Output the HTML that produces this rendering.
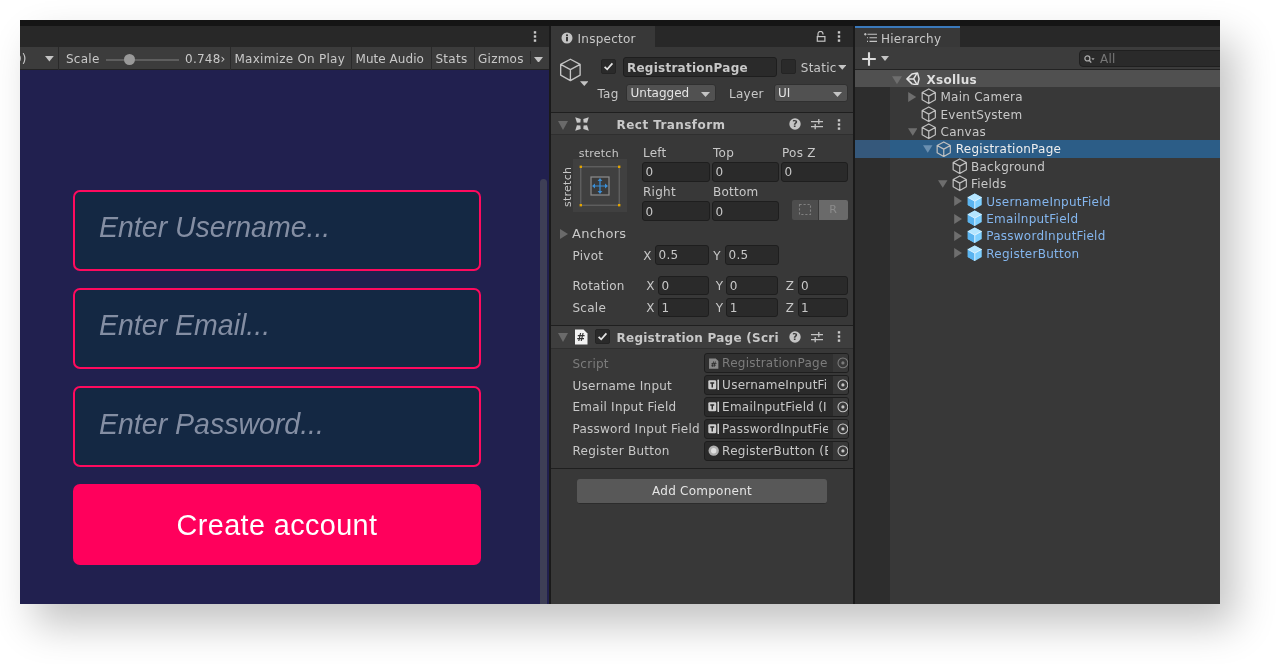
<!DOCTYPE html>
<html lang="en">
<head>
<meta charset="utf-8">
<title>Unity Registration Page</title>
<style>
*{box-sizing:border-box;margin:0;padding:0}
html,body{width:1280px;height:664px;background:#fff;overflow:hidden}
body{position:relative;font-family:"DejaVu Sans","Liberation Sans",sans-serif;font-size:12px;color:#c8c8c8}
#shot{position:absolute;left:20px;top:20px;width:1200px;height:584px;overflow:hidden;will-change:transform}
#shadow{position:absolute;left:20px;top:20px;width:1200px;height:584px;background:#383838;box-shadow:15px 21px 38px rgba(0,0,0,.235)}
.a{position:absolute}
.t{position:absolute;white-space:nowrap;line-height:14px;height:14px;letter-spacing:.25px;margin-top:.9px}
.b{font-weight:bold}
.fld{position:absolute;background:#2a2a2a;border:1px solid #1e1e1e;border-radius:3px;height:16px}
.fld span{position:absolute;left:2.5px;top:2.1px;line-height:14px;letter-spacing:.25px}
.vs{top:21px;width:1px;height:22.5px;background:#2a2a2a}
.gf{position:absolute;left:53px;width:408px;height:81px;border:2px solid #ff0a5e;border-radius:7px;background:#142843}
.gf span{position:absolute;left:24px;top:17.6px;font-family:"Liberation Sans",sans-serif;font-style:italic;font-size:29.7px;line-height:36px;color:#848ea3;white-space:nowrap;transform:scaleX(.96);transform-origin:0 50%}
.gb{position:absolute;left:53px;width:408px;height:81px;border-radius:7px;background:#ff005c;text-align:center}
.gb span{font-family:"Liberation Sans",sans-serif;font-size:28.8px;letter-spacing:.4px;line-height:82px;color:#fff;white-space:nowrap}
.s{font-size:11px}
.dis{color:#7c7c7c}
.cb{position:absolute;width:15px;height:15px;background:#2a2a2a;border:1px solid #242424;border-radius:2px}
.dd{position:absolute;height:18.6px;background:#515151;border-radius:3px;border:1px solid #303030}
.dd span{position:absolute;left:3.5px;top:1.4px;line-height:14px;letter-spacing:0;color:#e4e4e4}
.of{overflow:hidden}
.of.dis{background:#303030}
</style>
</head>
<body>
<div id="shadow"></div>
<div id="shot">
<!-- top strip -->
<div class="a" style="left:0;top:0;width:1200px;height:6px;background:#151515"></div>

<!-- ================= GAME PANEL ================= -->
<div id="game" class="a" style="left:0;top:6px;width:529px;height:578px;background:#21204f">
  <div class="a" style="left:0;top:0;width:529px;height:21px;background:#282828"></div>
  <!-- kebab -->
  <svg class="a" style="left:512px;top:4px" width="6" height="13" viewBox="0 0 6 13"><g fill="#c8c8c8"><rect x="1.8" y="1.2" width="2.4" height="2.4"/><rect x="1.8" y="5.3" width="2.4" height="2.4"/><rect x="1.8" y="9.4" width="2.4" height="2.4"/></g></svg>
  <!-- toolbar -->
  <div class="a" style="left:0;top:21px;width:529px;height:22.9px;background:#3c3c3c;border-bottom:1px solid #232323"></div>
  <div class="t" style="left:-6.1px;top:25px">9)</div>
  <svg class="a" style="left:25.3px;top:30.3px" width="8.8" height="5.5" viewBox="0 0 8 5"><path d="M0 0h8L4 5z" fill="#c4c4c4"/></svg>
  <div class="a vs" style="left:38px"></div>
  <div class="t" style="left:46px;top:25px">Scale</div>
  <div class="a" style="left:86px;top:32.5px;width:73px;height:2px;background:#5e5e5e"></div>
  <div class="a" style="left:104px;top:28px;width:11px;height:11px;border-radius:50%;background:#999"></div>
  <div class="t" style="left:165px;top:25px">0.748&#8250;</div>
  <div class="a vs" style="left:210px"></div>
  <div class="t" style="left:214.5px;top:25px">Maximize On Play</div>
  <div class="a vs" style="left:331px"></div>
  <div class="t" style="left:335.5px;top:25px;letter-spacing:.05px">Mute Audio</div>
  <div class="a vs" style="left:411px"></div>
  <div class="t" style="left:415.5px;top:25px">Stats</div>
  <div class="a vs" style="left:453.5px"></div>
  <div class="t" style="left:458px;top:25px">Gizmos</div>
  <div class="a" style="left:509.5px;top:25px;width:1px;height:13px;background:#2a2a2a"></div>
  <svg class="a" style="left:514.4px;top:30.6px" width="9" height="5.8" viewBox="0 0 8 5"><path d="M0 0h8L4 5z" fill="#c4c4c4"/></svg>
  <!-- scrollbar -->
  <div class="a" style="left:520px;top:152.6px;width:7px;height:430px;background:#3e3f56;border-radius:3.5px 3.5px 0 0"></div>
  <!-- form -->
  <div class="gf" style="top:163.5px"><span>Enter Username...</span></div>
  <div class="gf" style="top:261.8px"><span>Enter Email...</span></div>
  <div class="gf" style="top:360.1px"><span>Enter Password...</span></div>
  <div class="gb" style="top:458.4px"><span>Create account</span></div>
</div>

<!-- divider -->
<div class="a" style="left:529px;top:6px;width:2px;height:578px;background:#1a1a1a"></div>

<!-- ================= INSPECTOR ================= -->
<div id="insp" class="a" style="left:531px;top:6px;width:302px;height:578px;background:#383838">
  <div class="a" style="left:0;top:0;width:302px;height:21px;background:#282828"></div>
  <div class="a" style="left:0;top:0;width:103.5px;height:21px;background:#383838"></div>
  <svg class="a" style="left:9.5px;top:5.5px" width="12" height="12" viewBox="0 0 12 12"><circle cx="6" cy="6" r="5.5" fill="#c4c4c4"/><rect x="5" y="5" width="2" height="4.3" fill="#383838"/><rect x="5" y="2.4" width="2" height="1.8" fill="#383838"/></svg>
  <div class="t" style="left:26.5px;top:4.7px">Inspector</div>
  <svg class="a" style="left:265px;top:5.3px" width="10" height="11" viewBox="0 0 10 11"><path d="M2 5.4V2.9a2.5 2.5 0 0 1 5 0V3.6" fill="none" stroke="#c4c4c4" stroke-width="1.2"/><rect x="1.3" y="5.6" width="7.6" height="4.6" fill="none" stroke="#c4c4c4" stroke-width="1.2"/></svg>
  <svg class="a" style="left:285px;top:4px" width="6" height="13" viewBox="0 0 6 13"><g fill="#c8c8c8"><rect x="1.8" y="1.2" width="2.4" height="2.4"/><rect x="1.8" y="5.3" width="2.4" height="2.4"/><rect x="1.8" y="9.4" width="2.4" height="2.4"/></g></svg>
  <svg class="a" style="left:8px;top:32.4px" width="22.8" height="23.8" viewBox="0 0 22 23"><path d="M11 1.2 20.4 6.2V16.6L11 21.8 1.6 16.6V6.2zM1.6 6.2 11 11.2 20.4 6.2M11 11.2V21.8" fill="none" stroke="#c4c4c4" stroke-width="1.3" stroke-linejoin="round"/></svg>
  <svg class="a" style="left:28.6px;top:55.1px" width="8.6" height="5.2" viewBox="0 0 7 4"><path d="M0 0h7L3.5 4z" fill="#c4c4c4"/></svg>
  <div class="cb" style="left:50.1px;top:33.0px"><svg width="13" height="13" viewBox="0 0 13 13" style="position:absolute;left:0;top:0"><path d="M2.6 6.8 5.2 9.3 10.4 3.4" fill="none" stroke="#e4e4e4" stroke-width="1.7"/></svg></div>
  <div class="fld" style="left:72.2px;top:31.2px;width:153.4px;height:19.4px"><span class="b" style="top:2.6px;left:2.8px">RegistrationPage</span></div>
  <div class="cb" style="left:229.8px;top:33.2px"></div>
  <div class="t" style="left:249.8px;top:33.9px">Static</div>
  <svg class="a" style="left:286.5px;top:38.9px" width="8.5" height="4.7" viewBox="0 0 7 4"><path d="M0 0h7L3.5 4z" fill="#c4c4c4"/></svg>
  <div class="t" style="left:46.5px;top:59.7px">Tag</div>
  <div class="dd" style="left:75px;top:57.9px;width:90.3px"><span>Untagged</span><svg width="9" height="5" viewBox="0 0 9 5" style="position:absolute;right:5px;top:7px"><path d="M0 0h9L4.5 5z" fill="#c4c4c4"/></svg></div>
  <div class="t" style="left:178px;top:59.7px">Layer</div>
  <div class="dd" style="left:222.5px;top:57.9px;width:74px"><span>UI</span><svg width="9" height="5" viewBox="0 0 9 5" style="position:absolute;right:5px;top:7px"><path d="M0 0h9L4.5 5z" fill="#c4c4c4"/></svg></div>
  <div class="a" style="left:0;top:86px;width:302px;height:23px;background:#3e3e3e;border-top:1px solid #1f1f1f;border-bottom:1px solid #2f2f2f"></div>
  <svg class="a" style="left:6.7px;top:94.5px" width="10" height="9" viewBox="0 0 10 9"><path d="M0 0h10L5 9z" fill="#6a6a6a"/></svg>
  <svg class="a" style="left:24px;top:91.3px" width="14" height="14" viewBox="0 0 14 14"><g fill="#c8c8c8"><path d="M0.2 0.2 5.7 1.9 5.4 5.4 1.9 5.7z"/><path d="M13.8 0.2 12.1 5.7 8.6 5.4 8.3 1.9z"/><path d="M0.2 13.8 1.9 8.3 5.4 8.6 5.7 12.1z"/><path d="M13.8 13.8 8.3 12.1 8.6 8.6 12.1 8.3z"/></g></svg>
  <div class="t b" style="left:65.6px;top:91.1px;letter-spacing:.43px">Rect Transform</div>
  <svg class="a" style="left:238px;top:92.2px" width="12" height="12" viewBox="0 0 12 12"><circle cx="6" cy="6" r="5.7" fill="#c4c4c4"/><text x="6" y="9.4" text-anchor="middle" font-family="DejaVu Sans, sans-serif" font-weight="bold" font-size="9.5" fill="#3e3e3e">?</text></svg>
  <svg class="a" style="left:259.8px;top:92.2px" width="12" height="12" viewBox="0 0 12 12"><g stroke="#c4c4c4" stroke-width="1.3" fill="none"><path d="M0 3.7h12M0 8.6h12M7.8 1v5.2M4.2 6v5.2"/></g></svg>
  <svg class="a" style="left:285px;top:91.7px" width="6" height="13" viewBox="0 0 6 13"><g fill="#c8c8c8"><rect x="1.8" y="1.2" width="2.4" height="2.4"/><rect x="1.8" y="5.3" width="2.4" height="2.4"/><rect x="1.8" y="9.4" width="2.4" height="2.4"/></g></svg>
  <div class="a" style="left:22.3px;top:133.4px;width:53.4px;height:52.4px;background:#404040"></div>
  <svg class="a" style="left:26.8px;top:137.9px" width="44" height="44" viewBox="0 0 44 44"><rect x="2.8" y="2.8" width="38.4" height="38.4" fill="none" stroke="#6b6b6b" stroke-width="1"/><g fill="#e2a400"><rect x="1.6" y="1.6" width="2.4" height="2.4"/><rect x="40" y="1.6" width="2.4" height="2.4"/><rect x="1.6" y="40" width="2.4" height="2.4"/><rect x="40" y="40" width="2.4" height="2.4"/></g><rect x="13" y="13" width="18" height="18" fill="#3a3a3a" stroke="#8e8e8e" stroke-width="1.2"/><g stroke="#3a8fd8" stroke-width="1.2" fill="#3a8fd8"><path d="M22 15.5v13M15.5 22h13" fill="none"/><path d="M22 14l2.4 3h-4.8zM22 30l2.4-3h-4.8zM14 22l3-2.4v4.8zM30 22l-3-2.4v4.8z" stroke="none"/></g></svg>
  <div class="t s" style="left:27.7px;top:120px">stretch</div>
  <div class="t s" style="left:9.5px;top:180px;transform:rotate(-90deg);transform-origin:0 0">stretch</div>
  <div class="t" style="left:92px;top:119.3px">Left</div>
  <div class="t" style="left:162px;top:119.3px">Top</div>
  <div class="t" style="left:231px;top:119.3px">Pos Z</div>
  <div class="fld" style="left:91px;top:136.05px;width:67.5px;height:19.6px"><span>0</span></div>
  <div class="fld" style="left:161px;top:136.05px;width:67.3px;height:19.6px"><span>0</span></div>
  <div class="fld" style="left:230px;top:136.05px;width:67.3px;height:19.6px"><span>0</span></div>
  <div class="t" style="left:92px;top:157.8px">Right</div>
  <div class="t" style="left:162px;top:157.8px">Bottom</div>
  <div class="fld" style="left:91px;top:175.45px;width:67.5px;height:19.6px"><span>0</span></div>
  <div class="fld" style="left:161px;top:175.45px;width:67.3px;height:19.6px"><span>0</span></div>
  <div class="a" style="left:241.3px;top:174px;width:26px;height:20px;background:#4d4d4d;border-radius:2px 0 0 2px"><svg width="26" height="20" viewBox="0 0 26 20"><rect x="7.5" y="4.5" width="11" height="10" fill="none" stroke="#808080" stroke-width="1.1" stroke-dasharray="2.2 1.8"/></svg></div>
  <div class="a" style="left:267.6px;top:174px;width:29px;height:20px;background:#6a6a6a;border-radius:0 2px 2px 0;text-align:center;color:#8c8c8c;line-height:19px;font-size:11px">R</div>
  <svg class="a" style="left:9px;top:202.7px" width="8" height="10" viewBox="0 0 8 10"><path d="M0 0v10L8 5z" fill="#6a6a6a"/></svg>
  <div class="t" style="left:21px;top:199.2px;font-size:13px;line-height:16px;height:16px">Anchors</div>
  <div class="t" style="left:21.5px;top:221.7px">Pivot</div>
  <div class="t" style="left:92.2px;top:221.7px">X</div>
  <div class="fld" style="left:104px;top:219.2px;width:54.3px;height:19.6px"><span>0.5</span></div>
  <div class="t" style="left:162.2px;top:221.7px">Y</div>
  <div class="fld" style="left:174px;top:219.2px;width:54.3px;height:19.6px"><span>0.5</span></div>
  <div class="t" style="left:21.5px;top:252.2px">Rotation</div>
  <div class="t" style="left:95.2px;top:252.2px">X</div>
  <div class="fld" style="left:107px;top:249.7px;width:51.3px;height:19.6px"><span>0</span></div>
  <div class="t" style="left:164.7px;top:252.2px">Y</div>
  <div class="fld" style="left:175.2px;top:249.7px;width:51.8px;height:19.6px"><span>0</span></div>
  <div class="t" style="left:234.7px;top:252.2px">Z</div>
  <div class="fld" style="left:246.5px;top:249.7px;width:50.5px;height:19.6px"><span>0</span></div>
  <div class="t" style="left:21.5px;top:274.2px">Scale</div>
  <div class="t" style="left:95.2px;top:274.2px">X</div>
  <div class="fld" style="left:107px;top:271.7px;width:51.3px;height:19.6px"><span>1</span></div>
  <div class="t" style="left:164.7px;top:274.2px">Y</div>
  <div class="fld" style="left:175.2px;top:271.7px;width:51.8px;height:19.6px"><span>1</span></div>
  <div class="t" style="left:234.7px;top:274.2px">Z</div>
  <div class="fld" style="left:246.5px;top:271.7px;width:50.5px;height:19.6px"><span>1</span></div>
  <div class="a" style="left:0;top:299.2px;width:302px;height:23.8px;background:#3e3e3e;border-top:1px solid #1f1f1f;border-bottom:1px solid #2f2f2f"></div>
  <svg class="a" style="left:6.7px;top:307px" width="10" height="9" viewBox="0 0 10 9"><path d="M0 0h10L5 9z" fill="#6a6a6a"/></svg>
  <svg class="a" style="left:22.8px;top:302.7px" width="14" height="16" viewBox="0 0 14 16"><path d="M1 0.5h8.5L13.5 4.5V15.5H1z" fill="#f2f2f2"/><text x="7" y="12.3" text-anchor="middle" font-family="DejaVu Sans, sans-serif" font-weight="bold" font-size="10.5" fill="#333">#</text></svg>
  <div class="cb" style="left:44px;top:303.3px"><svg width="13" height="13" viewBox="0 0 13 13" style="position:absolute;left:0;top:0"><path d="M2.6 6.8 5.2 9.3 10.4 3.4" fill="none" stroke="#e4e4e4" stroke-width="1.7"/></svg></div>
  <div class="t b" style="left:65.5px;top:304.2px">Registration Page (Scri</div>
  <svg class="a" style="left:238px;top:304.7px" width="12" height="12" viewBox="0 0 12 12"><circle cx="6" cy="6" r="5.7" fill="#c4c4c4"/><text x="6" y="9.4" text-anchor="middle" font-family="DejaVu Sans, sans-serif" font-weight="bold" font-size="9.5" fill="#3e3e3e">?</text></svg>
  <svg class="a" style="left:259.8px;top:304.7px" width="12" height="12" viewBox="0 0 12 12"><g stroke="#c4c4c4" stroke-width="1.3" fill="none"><path d="M0 3.7h12M0 8.6h12M7.8 1v5.2M4.2 6v5.2"/></g></svg>
  <svg class="a" style="left:285px;top:304.2px" width="6" height="13" viewBox="0 0 6 13"><g fill="#c8c8c8"><rect x="1.8" y="1.2" width="2.4" height="2.4"/><rect x="1.8" y="5.3" width="2.4" height="2.4"/><rect x="1.8" y="9.4" width="2.4" height="2.4"/></g></svg>
  <div class="t dis" style="left:21.5px;top:329.9px">Script</div>
  <div class="fld of dis" style="left:153.3px;top:327.4px;width:144.6px;height:19.6px"><svg width="11.4" height="11.4" viewBox="0 0 11 11" style="position:absolute;left:2.7px;top:3.2px"><path d="M1 0.5h6.5L10 3V10.5H1z" fill="#8a8a8a"/><text x="5.5" y="9" text-anchor="middle" font-family="DejaVu Sans, sans-serif" font-weight="bold" font-size="7.5" fill="#2a2a2a">#</text></svg><span style="left:16.8px">RegistrationPage</span><svg width="20" height="18" viewBox="-5 0 20 18" style="position:absolute;right:0;top:0"><rect x="-5" y="0" width="5" height="18" fill="#303030"/><rect x="0" y="0" width="15" height="18" fill="#383838"/><circle cx="9.9" cy="8.9" r="4.9" fill="none" stroke="#7c7c7c" stroke-width="1.05"/><circle cx="9.9" cy="8.9" r="1.6" fill="#7c7c7c"/></svg></div>
  <div class="t" style="left:21.5px;top:351.7px">Username Input</div>
  <div class="fld of" style="left:153.3px;top:349.2px;width:144.6px;height:19.6px"><svg width="11.4" height="11.4" viewBox="0 0 11 11" style="position:absolute;left:2.7px;top:3.2px"><rect x="0.3" y="1.2" width="7.6" height="8.8" rx="1.2" fill="#cdcdcd"/><path d="M2.2 3.2h3.8v1.3H4.8v3.7H3.4V4.5H2.2z" fill="#2a2a2a"/><rect x="9.1" y="0.6" width="1.6" height="10" rx=".6" fill="#cdcdcd"/></svg><span style="left:16.8px">UsernameInputFi</span><svg width="20" height="18" viewBox="-5 0 20 18" style="position:absolute;right:0;top:0"><rect x="-5" y="0" width="5" height="18" fill="#2a2a2a"/><rect x="0" y="0" width="15" height="18" fill="#383838"/><circle cx="9.9" cy="8.9" r="4.9" fill="none" stroke="#c4c4c4" stroke-width="1.05"/><circle cx="9.9" cy="8.9" r="1.6" fill="#c4c4c4"/></svg></div>
  <div class="t" style="left:21.5px;top:373.5px">Email Input Field</div>
  <div class="fld of" style="left:153.3px;top:371.0px;width:144.6px;height:19.6px"><svg width="11.4" height="11.4" viewBox="0 0 11 11" style="position:absolute;left:2.7px;top:3.2px"><rect x="0.3" y="1.2" width="7.6" height="8.8" rx="1.2" fill="#cdcdcd"/><path d="M2.2 3.2h3.8v1.3H4.8v3.7H3.4V4.5H2.2z" fill="#2a2a2a"/><rect x="9.1" y="0.6" width="1.6" height="10" rx=".6" fill="#cdcdcd"/></svg><span style="left:16.8px">EmailnputField (I</span><svg width="20" height="18" viewBox="-5 0 20 18" style="position:absolute;right:0;top:0"><rect x="-5" y="0" width="5" height="18" fill="#2a2a2a"/><rect x="0" y="0" width="15" height="18" fill="#383838"/><circle cx="9.9" cy="8.9" r="4.9" fill="none" stroke="#c4c4c4" stroke-width="1.05"/><circle cx="9.9" cy="8.9" r="1.6" fill="#c4c4c4"/></svg></div>
  <div class="t" style="left:21.5px;top:395.5px">Password Input Field</div>
  <div class="fld of" style="left:153.3px;top:393.0px;width:144.6px;height:19.6px"><svg width="11.4" height="11.4" viewBox="0 0 11 11" style="position:absolute;left:2.7px;top:3.2px"><rect x="0.3" y="1.2" width="7.6" height="8.8" rx="1.2" fill="#cdcdcd"/><path d="M2.2 3.2h3.8v1.3H4.8v3.7H3.4V4.5H2.2z" fill="#2a2a2a"/><rect x="9.1" y="0.6" width="1.6" height="10" rx=".6" fill="#cdcdcd"/></svg><span style="left:16.8px">PasswordInputFie</span><svg width="20" height="18" viewBox="-5 0 20 18" style="position:absolute;right:0;top:0"><rect x="-5" y="0" width="5" height="18" fill="#2a2a2a"/><rect x="0" y="0" width="15" height="18" fill="#383838"/><circle cx="9.9" cy="8.9" r="4.9" fill="none" stroke="#c4c4c4" stroke-width="1.05"/><circle cx="9.9" cy="8.9" r="1.6" fill="#c4c4c4"/></svg></div>
  <div class="t" style="left:21.5px;top:417.5px">Register Button</div>
  <div class="fld of" style="left:153.3px;top:415.0px;width:144.6px;height:19.6px"><svg width="11.4" height="11.4" viewBox="0 0 11 11" style="position:absolute;left:2.7px;top:3.2px"><circle cx="5.5" cy="5.5" r="5" fill="#b0b0b0"/><circle cx="5.5" cy="5.5" r="2.6" fill="#e0e0e0"/></svg><span style="left:16.8px">RegisterButton (E</span><svg width="20" height="18" viewBox="-5 0 20 18" style="position:absolute;right:0;top:0"><rect x="-5" y="0" width="5" height="18" fill="#2a2a2a"/><rect x="0" y="0" width="15" height="18" fill="#383838"/><circle cx="9.9" cy="8.9" r="4.9" fill="none" stroke="#c4c4c4" stroke-width="1.05"/><circle cx="9.9" cy="8.9" r="1.6" fill="#c4c4c4"/></svg></div>
  <div class="a" style="left:0;top:442px;width:302px;height:1px;background:#1f1f1f"></div>
  <div class="a" style="left:26px;top:452.7px;width:250px;height:25.4px;background:#585858;border-radius:3px;text-align:center;line-height:25.4px;letter-spacing:.25px;color:#e4e4e4;border-bottom:1px solid #2c2c2c">Add Component</div>
</div>

<!-- divider -->
<div class="a" style="left:833px;top:6px;width:2px;height:578px;background:#1a1a1a"></div>

<!-- ================= HIERARCHY ================= -->
<div id="hier" class="a" style="left:835px;top:6px;width:365px;height:578px;background:#383838">
  <div class="a" style="left:0;top:0;width:365px;height:21px;background:#282828"></div>
  <div class="a" style="left:0;top:.3px;width:105px;height:20.7px;background:#383838;border-top:2.5px solid #3a79bb"></div>
  <svg class="a" style="left:8.5px;top:6.5px" width="13" height="10" viewBox="0 0 13 10"><g stroke="#c4c4c4" stroke-width="1.1" fill="none"><path d="M3.5 1.2H13M5.5 4.8H13M5.5 8.4H13M0 1.2h2.6M1.3 0v2.6M3 4.8H4M3 8.4H4"/></g></svg>
  <div class="t" style="left:26px;top:5.2px">Hierarchy</div>
  <div class="a" style="left:0;top:21px;width:365px;height:23px;background:#3c3c3c;border-bottom:1px solid #232323"></div>
  <svg class="a" style="left:7.1px;top:25.6px" width="14" height="14" viewBox="0 0 14 14"><path d="M7 0.3v13.4M0.2 7h13.6" stroke="#dcdcdc" stroke-width="2.1" fill="none"/></svg>
  <svg class="a" style="left:25.7px;top:30px" width="8" height="5" viewBox="0 0 8 5"><path d="M0 0h8L4 5z" fill="#c4c4c4"/></svg>
  <div class="a" style="left:224.4px;top:24.2px;width:150px;height:17px;background:#2a2a2a;border:1px solid #1f1f1f;border-radius:4px 0 0 4px"></div>
  <svg class="a" style="left:229.3px;top:28.5px" width="11" height="9" viewBox="0 0 11 9"><circle cx="3.4" cy="3.4" r="2.5" fill="none" stroke="#a8a8a8" stroke-width="1.3"/><path d="M5.2 5.2 7.2 7.6" stroke="#a8a8a8" stroke-width="1.4"/><path d="M7.4 3.2h3.2L9 5.2z" fill="#a8a8a8"/></svg>
  <div class="t" style="left:245px;top:25.5px;color:#777">All</div>
  <div class="a" style="left:0;top:61px;width:35px;height:520px;background:#2d2d2d"></div>
  <div class="a" style="left:0;top:44px;width:365px;height:17px;background:#505050"></div>
  <svg class="a" style="left:36.9px;top:49.6px" width="10" height="8.3" viewBox="0 0 10 8"><path d="M0 0h10L5 8z" fill="#6e6e6e"/></svg>
  <svg class="a" style="left:51.2px;top:45.6px" width="14" height="13.8" viewBox="0 0 15 15"><g fill="none" stroke="#e4e4e4" stroke-width="1.6" stroke-linejoin="round"><path d="M0.9 7.5 6.4 2.1 12.4 1 14.1 7.5 12.4 14 6.4 12.9z"/><path d="M0.9 7.5H8.2M8.2 7.5 11.4 2M8.2 7.5 11.4 13"/></g></svg>
  <div class="t b" style="left:71.6px;top:45.7px;color:#dedede">Xsollus</div>
  <svg class="a" style="left:53.2px;top:66.05px" width="8.4" height="10" viewBox="0 0 8 10"><path d="M0 0v10L8 5z" fill="#6e6e6e"/></svg>
  <svg class="a" style="left:66.0px;top:62.45px" width="15.5" height="16.5" viewBox="0 0 16 17"><path d="M8 1 14.8 4.6V12.2L8 16 1.2 12.2V4.6zM1.2 4.6 8 8.4 14.8 4.6M8 8.4V16" fill="none" stroke="#c0c0c0" stroke-width="1.25" stroke-linejoin="round"/></svg>
  <div class="t" style="left:85.5px;top:63.45px;">Main Camera</div>
  <svg class="a" style="left:66.0px;top:79.81px" width="15.5" height="16.5" viewBox="0 0 16 17"><path d="M8 1 14.8 4.6V12.2L8 16 1.2 12.2V4.6zM1.2 4.6 8 8.4 14.8 4.6M8 8.4V16" fill="none" stroke="#c0c0c0" stroke-width="1.25" stroke-linejoin="round"/></svg>
  <div class="t" style="left:85.5px;top:80.81px;">EventSystem</div>
  <svg class="a" style="left:52.8px;top:101.87px" width="9.5" height="8" viewBox="0 0 10 8"><path d="M0 0h10L5 8z" fill="#6e6e6e"/></svg>
  <svg class="a" style="left:66.0px;top:97.17px" width="15.5" height="16.5" viewBox="0 0 16 17"><path d="M8 1 14.8 4.6V12.2L8 16 1.2 12.2V4.6zM1.2 4.6 8 8.4 14.8 4.6M8 8.4V16" fill="none" stroke="#c0c0c0" stroke-width="1.25" stroke-linejoin="round"/></svg>
  <div class="t" style="left:85.5px;top:98.17px;">Canvas</div>
  <div class="a" style="left:0;top:114px;width:365px;height:17.8px;background:#2c5d87"></div>
  <div class="a" style="left:0;top:114px;width:35px;height:17.8px;background:#35587b"></div>
  <svg class="a" style="left:68.05px;top:119.23px" width="9.5" height="8" viewBox="0 0 10 8"><path d="M0 0h10L5 8z" fill="#6a8fb0"/></svg>
  <svg class="a" style="left:81.25px;top:114.53px" width="15.5" height="16.5" viewBox="0 0 16 17"><path d="M8 1 14.8 4.6V12.2L8 16 1.2 12.2V4.6zM1.2 4.6 8 8.4 14.8 4.6M8 8.4V16" fill="none" stroke="#c0c0c0" stroke-width="1.25" stroke-linejoin="round"/></svg>
  <div class="t" style="left:100.75px;top:115.53px;color:#eee">RegistrationPage</div>
  <svg class="a" style="left:96.5px;top:131.89px" width="15.5" height="16.5" viewBox="0 0 16 17"><path d="M8 1 14.8 4.6V12.2L8 16 1.2 12.2V4.6zM1.2 4.6 8 8.4 14.8 4.6M8 8.4V16" fill="none" stroke="#c0c0c0" stroke-width="1.25" stroke-linejoin="round"/></svg>
  <div class="t" style="left:116.0px;top:132.89px;">Background</div>
  <svg class="a" style="left:83.3px;top:153.95px" width="9.5" height="8" viewBox="0 0 10 8"><path d="M0 0h10L5 8z" fill="#6e6e6e"/></svg>
  <svg class="a" style="left:96.5px;top:149.25px" width="15.5" height="16.5" viewBox="0 0 16 17"><path d="M8 1 14.8 4.6V12.2L8 16 1.2 12.2V4.6zM1.2 4.6 8 8.4 14.8 4.6M8 8.4V16" fill="none" stroke="#c0c0c0" stroke-width="1.25" stroke-linejoin="round"/></svg>
  <div class="t" style="left:116.0px;top:150.25px;">Fields</div>
  <svg class="a" style="left:98.95px;top:170.21px" width="8.4" height="10" viewBox="0 0 8 10"><path d="M0 0v10L8 5z" fill="#6e6e6e"/></svg>
  <svg class="a" style="left:111.75px;top:166.61px" width="15.5" height="16.5" viewBox="0 0 16 17"><path d="M8 0.6 15.2 4.4V12.4L8 16.4 0.8 12.4V4.4z" fill="#7fd0ff"/><path d="M8 0.6 15.2 4.4 8 8.4 0.8 4.4z" fill="#b5e6ff"/><path d="M0.8 4.4 8 8.4V16.4L0.8 12.4z" fill="#5ab4f0"/><path d="M0.8 4.4 8 8.4 15.2 4.4M8 8.4V16.4" fill="none" stroke="#e6f6ff" stroke-width="0.9"/></svg>
  <div class="t" style="left:131.25px;top:167.61px;color:#84b6ee">UsernameInputField</div>
  <svg class="a" style="left:98.95px;top:187.57px" width="8.4" height="10" viewBox="0 0 8 10"><path d="M0 0v10L8 5z" fill="#6e6e6e"/></svg>
  <svg class="a" style="left:111.75px;top:183.97px" width="15.5" height="16.5" viewBox="0 0 16 17"><path d="M8 0.6 15.2 4.4V12.4L8 16.4 0.8 12.4V4.4z" fill="#7fd0ff"/><path d="M8 0.6 15.2 4.4 8 8.4 0.8 4.4z" fill="#b5e6ff"/><path d="M0.8 4.4 8 8.4V16.4L0.8 12.4z" fill="#5ab4f0"/><path d="M0.8 4.4 8 8.4 15.2 4.4M8 8.4V16.4" fill="none" stroke="#e6f6ff" stroke-width="0.9"/></svg>
  <div class="t" style="left:131.25px;top:184.97px;color:#84b6ee">EmailnputField</div>
  <svg class="a" style="left:98.95px;top:204.93px" width="8.4" height="10" viewBox="0 0 8 10"><path d="M0 0v10L8 5z" fill="#6e6e6e"/></svg>
  <svg class="a" style="left:111.75px;top:201.33px" width="15.5" height="16.5" viewBox="0 0 16 17"><path d="M8 0.6 15.2 4.4V12.4L8 16.4 0.8 12.4V4.4z" fill="#7fd0ff"/><path d="M8 0.6 15.2 4.4 8 8.4 0.8 4.4z" fill="#b5e6ff"/><path d="M0.8 4.4 8 8.4V16.4L0.8 12.4z" fill="#5ab4f0"/><path d="M0.8 4.4 8 8.4 15.2 4.4M8 8.4V16.4" fill="none" stroke="#e6f6ff" stroke-width="0.9"/></svg>
  <div class="t" style="left:131.25px;top:202.33px;color:#84b6ee">PasswordInputField</div>
  <svg class="a" style="left:98.95px;top:222.29px" width="8.4" height="10" viewBox="0 0 8 10"><path d="M0 0v10L8 5z" fill="#6e6e6e"/></svg>
  <svg class="a" style="left:111.75px;top:218.69px" width="15.5" height="16.5" viewBox="0 0 16 17"><path d="M8 0.6 15.2 4.4V12.4L8 16.4 0.8 12.4V4.4z" fill="#7fd0ff"/><path d="M8 0.6 15.2 4.4 8 8.4 0.8 4.4z" fill="#b5e6ff"/><path d="M0.8 4.4 8 8.4V16.4L0.8 12.4z" fill="#5ab4f0"/><path d="M0.8 4.4 8 8.4 15.2 4.4M8 8.4V16.4" fill="none" stroke="#e6f6ff" stroke-width="0.9"/></svg>
  <div class="t" style="left:131.25px;top:219.69px;color:#84b6ee">RegisterButton</div>
</div>
</div>
</body>
</html>
